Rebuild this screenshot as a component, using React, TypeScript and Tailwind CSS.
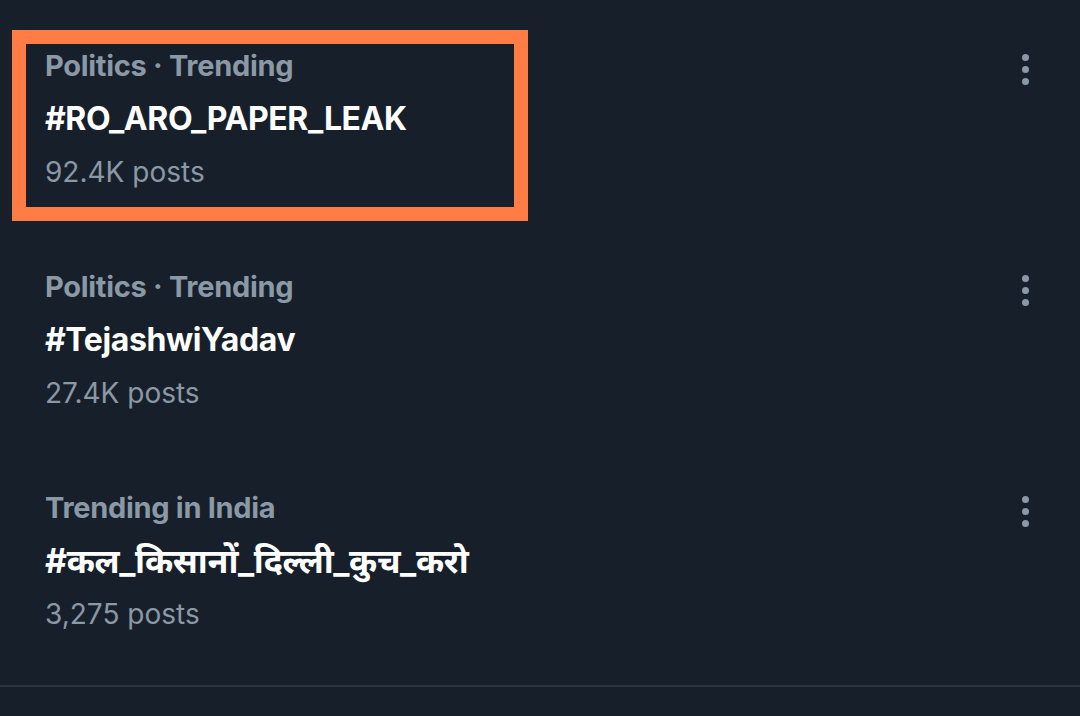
import { useMemo } from "react";

interface Trend {
  category: string;
  tag: string;
  posts: string;
  highlighted?: boolean;
  script?: "deva";
}

const TRENDS: Trend[] = [
  { category: "Politics · Trending", tag: "#RO_ARO_PAPER_LEAK", posts: "92.4K posts", highlighted: true },
  { category: "Politics · Trending", tag: "#TejashwiYadav", posts: "27.4K posts" },
  { category: "Trending in India", tag: "#कल_किसानों_दिल्ली_कुच_करो", posts: "3,275 posts", script: "deva" },
];

function MoreDots() {
  return (
    <button type="button" aria-label="More" className="mr-[51px] mt-[24px] flex flex-col gap-[5px]">
      <span className="block h-[7px] w-[7px] rounded-full bg-[#8b98a5]" />
      <span className="block h-[7px] w-[7px] rounded-full bg-[#8b98a5]" />
      <span className="block h-[7px] w-[7px] rounded-full bg-[#8b98a5]" />
    </button>
  );
}

function TrendRow({ trend }: { trend: Trend }) {
  return (
    <li className="mb-[30px] flex items-start justify-between">
      {/* Annotation box around the highlighted trend */}
      <div
        className={`ml-[12px] w-[516px] border-[14px] pb-[15px] pl-[19px] pt-[2px] ${
          trend.highlighted ? "border-[#ff7d45]" : "border-transparent"
        }`}
      >
        <div className="text-[29px] font-bold leading-[40px] tracking-[-0.3px] text-[#8b98a5]">{trend.category}</div>
        <div
          className={`mt-[13px] whitespace-nowrap font-bold leading-[40px] tracking-[-0.4px] text-white ${
            trend.script === "deva" ? "text-[34px]" : "text-[32px]"
          }`}
        >
          {trend.tag}
        </div>
        <div className="mt-[13px] text-[28px] leading-[40px] text-[#8b98a5]">{trend.posts}</div>
      </div>
      <MoreDots />
    </li>
  );
}

export default function App() {
  const trends = useMemo(() => TRENDS, []);

  return (
    <div
      className="h-[716px] w-[1080px] overflow-hidden bg-[#17202a] pt-[30px]"
      style={{ fontFamily: "Inter, 'Noto Sans', 'Noto Sans Devanagari', 'DejaVu Sans', sans-serif" }}
    >
      <ul>
        {trends.map((t) => (
          <TrendRow key={t.tag} trend={t} />
        ))}
      </ul>
      <div className="mt-[-8px] h-[2px] w-full bg-[#2b333d]" />
    </div>
  );
}
